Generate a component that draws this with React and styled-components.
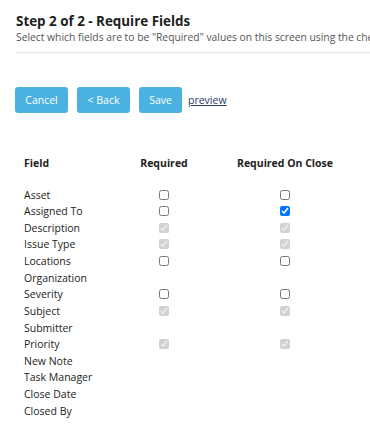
import React from 'react'
import styled, { createGlobalStyle } from 'styled-components'

const fields = [
  { name: 'Asset', req: 'off', close: 'off' },
  { name: 'Assigned To', req: 'off', close: 'on' },
  { name: 'Description', req: 'locked', close: 'locked' },
  { name: 'Issue Type', req: 'locked', close: 'locked' },
  { name: 'Locations', req: 'off', close: 'off' },
  { name: 'Organization' },
  { name: 'Severity', req: 'off', close: 'off' },
  { name: 'Subject', req: 'locked', close: 'locked' },
  { name: 'Submitter' },
  { name: 'Priority', req: 'locked', close: 'locked' },
  { name: 'New Note' },
  { name: 'Task Manager' },
  { name: 'Close Date' },
  { name: 'Closed By' },
]

function Box({ state }) {
  if (!state) return <Cell />
  return (
    <Cell>
      <Check
        type="checkbox"
        defaultChecked={state === 'on' || state === 'locked'}
        disabled={state === 'locked'}
      />
    </Cell>
  )
}

export default function App() {
  return (
    <Page>
      <GlobalStyle />
      <Header>
        <Title>Step 2 of 2 - Require Fields</Title>
        <Subtitle>
          Select which fields are to be "Required" values on this screen using the checkboxes below.
        </Subtitle>
      </Header>

      <Toolbar>
        <Button>Cancel</Button>
        <Button>&lt; Back</Button>
        <Button narrow>Save</Button>
        <Preview href="#">preview</Preview>
      </Toolbar>

      <Table>
        <HeadCell>Field</HeadCell>
        <HeadCell center>Required</HeadCell>
        <HeadCell center>Required On Close</HeadCell>
        {fields.map((f) => (
          <React.Fragment key={f.name}>
            <NameCell>{f.name}</NameCell>
            <Box state={f.req} />
            <Box state={f.close} />
          </React.Fragment>
        ))}
      </Table>
    </Page>
  )
}

const GlobalStyle = createGlobalStyle`
  html, body {
    margin: 0;
    background: #fff;
    overflow: hidden;
  }
  body {
    font-family: "Open Sans", "Noto Sans", sans-serif;
    color: #222;
  }
`

const Page = styled.div`
  width: 370px;
  padding: 12px 0 0 16px;
  box-sizing: border-box;
  overflow: hidden;
`

const Header = styled.div`
  border-bottom: 1px solid #e6e6e6;
  padding-bottom: 8px;
  margin-right: -20px;
`

const Title = styled.h2`
  margin: 0;
  font-size: 13.4px;
  font-weight: 700;
  line-height: 18px;
  color: #1e1e1e;
`

const Subtitle = styled.p`
  margin: 0;
  font-size: 10.3px;
  line-height: 14px;
  color: #555;
  white-space: nowrap;
`

const Toolbar = styled.div`
  display: flex;
  align-items: center;
  gap: 9px;
  margin-top: 34px;
  margin-left: -1px;
`

const Button = styled.button`
  height: 26px;
  width: ${(p) => (p.narrow ? '43px' : '53px')};
  padding: 0;
  border: none;
  border-radius: 3px;
  background: #4ab1e0;
  color: #fff;
  font-family: inherit;
  font-size: 10.5px;
`

const Preview = styled.a`
  margin-left: -3px;
  font-size: 10.5px;
  color: #1f3d6e;
  text-decoration: underline;
`

const Table = styled.div`
  display: grid;
  grid-template-columns: 90px 100px 142px;
  grid-template-rows: 31.3px;
  grid-auto-rows: 16.64px;
  margin-top: 42px;
  margin-left: 8px;
  font-size: 10.5px;
  align-items: center;
`

const HeadCell = styled.div`
  align-self: start;
  line-height: 16.64px;
  font-weight: 700;
  white-space: nowrap;
  text-align: ${(p) => (p.center ? 'center' : 'left')};
`

const NameCell = styled.div`
  white-space: nowrap;
  color: #222;
`

const Cell = styled.div`
  display: flex;
  justify-content: center;
  align-items: center;
`

const Check = styled.input`
  width: 10px;
  height: 10px;
  margin: 0;
`
